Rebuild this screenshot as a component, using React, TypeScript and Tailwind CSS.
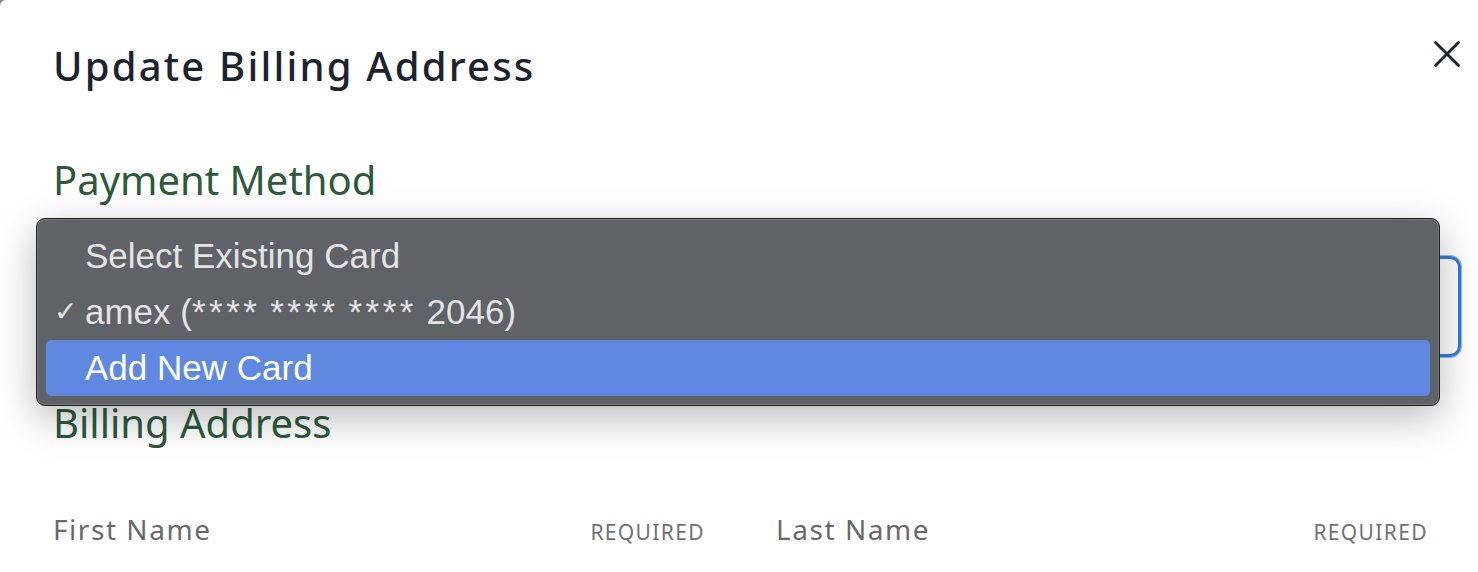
import { X } from "lucide-react";

const sans = { fontFamily: '"Noto Sans", "Open Sans", sans-serif' };

const Field = ({ label }: { label: string }) => (
  <div className="flex items-baseline justify-between">
    <span className="text-[28px] leading-[40px] tracking-[0.055em] text-[#666a6e]">{label}</span>
    <span className="text-[21px] tracking-[0.065em] text-[#6f7377]">REQUIRED</span>
  </div>
);

const Stars = () => <span className="tracking-[0.1em]">****</span>;

export default function App() {
  return (
    <div className="min-h-screen bg-[#8a8a8a]" style={sans}>
      <div className="relative h-[572px] overflow-hidden rounded-tl-[6px] bg-white pl-[53px] pr-[50px]">
        <div className="flex items-start justify-between pt-[36px]">
          <h2 className="text-[40px] font-medium leading-[60px] tracking-[0.055em] text-[#1b2230]">
            Update Billing Address
          </h2>
          <button className="-mr-[42px] mt-[-5px] text-[#1b2230]">
            <X className="h-[46px] w-[46px]" strokeWidth={1.5} />
          </button>
        </div>

        <div className="mt-[56px] text-[40px] leading-[56px] text-[#2d5a3b]">Payment Method</div>

        <div className="relative mt-[48px] -mr-[33px]">
          <div className="h-[101px] rounded-[11px] border-[3px] border-[#2f7ae5] shadow-[0_0_0_1px_rgba(47,122,229,0.5)]" />

          <div
            className="absolute left-[-17px] right-[21px] top-[-38px] z-10 rounded-[9px] border border-[#1e1f20] bg-[#5f6266] px-[9px] py-[9px] shadow-[0_12px_40px_rgba(0,0,0,0.28),inset_0_0_0_1px_rgba(255,255,255,0.16)]"
            style={{ fontFamily: '"Liberation Sans", Arial, sans-serif' }}
          >
            <div className="flex h-[56px] items-center pl-[39px] text-[35px] text-[#e4e4e4]">
              Select Existing Card
            </div>
            <div className="flex h-[56px] items-center text-[35px] text-[#e4e4e4]">
              <span className="w-[39px] pl-[8px] text-[28px]" style={{ fontFamily: '"DejaVu Sans", sans-serif' }}>
                ✓
              </span>
              <span>
                amex (<Stars /> <Stars /> <Stars /> 2046)
              </span>
            </div>
            <div className="flex h-[56px] items-center rounded-[5px] bg-[#5f89e1] pl-[39px] text-[35px] text-white">
              Add New Card
            </div>
          </div>
        </div>

        <div className="mt-[38px] text-[40px] leading-[56px] text-[#2d5a3b]">Billing Address</div>

        <div className="mt-[58px] grid grid-cols-2 gap-[71px]">
          <Field label="First Name" />
          <Field label="Last Name" />
        </div>
      </div>
    </div>
  );
}
